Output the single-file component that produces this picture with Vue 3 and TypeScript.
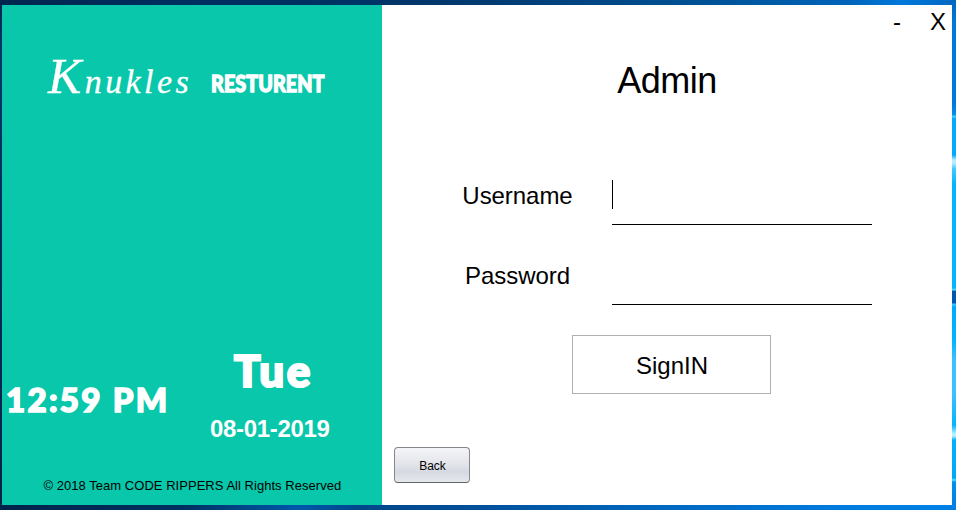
<script setup lang="ts">
import { ref } from 'vue'

const username = ref<string>('')
const password = ref<string>('')
const clock = '12:59 PM'
const day = 'Tue'
const date = '08-01-2019'
</script>

<template>
  <div class="desktop">
    <div class="edge"></div>
    <main class="window">
      <aside class="brand-panel">
        <header class="brand">
          <span class="script">Knukles</span>
          <span class="display name">RESTURENT</span>
        </header>
        <section class="moment">
          <div class="display clock">{{ clock }}</div>
          <div class="calendar">
            <div class="display day">{{ day }}</div>
            <div class="date">{{ date }}</div>
          </div>
        </section>
        <footer class="copyright">© 2018 Team CODE RIPPERS All Rights Reserved</footer>
      </aside>
      <section class="login">
        <nav class="controls"><span>-</span><span>X</span></nav>
        <h1>Admin</h1>
        <form class="form" @submit.prevent>
          <div class="row">
            <label for="user">Username</label>
            <div class="field">
              <input id="user" v-model="username" type="text" />
              <span v-if="!username" class="caret"></span>
            </div>
          </div>
          <div class="row">
            <label for="pass">Password</label>
            <div class="field"><input id="pass" v-model="password" type="password" /></div>
          </div>
          <button class="signin" type="submit">SignIN</button>
        </form>
        <button class="back" type="button">Back</button>
      </section>
    </main>
  </div>
</template>

<style>
body { margin: 0; overflow: hidden; }
</style>

<style scoped>
.desktop {
  position: relative;
  box-sizing: border-box;
  width: 956px;
  height: 510px;
  padding: 5px 4px 5px 2px;
  font-family: "Liberation Sans", Arial, sans-serif;
  color: #000;
  background:
    linear-gradient(90deg, #00264f 0, #002f60 200px, #003060 300px, #003a70 478px, #005296 710px, #0064ba 850px, #0078dc 900px, #0067c0 956px) 0 0 / 956px 5px no-repeat,
    linear-gradient(90deg, #00244b 0, #00305f 180px, #0058ab 300px, #00468a 360px, #00509a 478px, #0067bd 650px, #007cdf 850px, #0080e5 956px) 0 505px / 956px 5px no-repeat,
    linear-gradient(#00264f, #003769 50px, #002b58 250px, #00244b) 0 0 / 2px 510px no-repeat;
}
.edge {
  position: absolute;
  top: 5px;
  right: 0;
  width: 4px;
  height: 500px;
  background: linear-gradient(
    #006bc5 0, #0078dc 20px, #0078dc 98px, #0090ee 110px, #54d0f8 111px, #00aaff 114px, #00aaff 150px,
    #b5edff 155px, #b5edff 158px, #40c8ff 164px, #00b4ff 180px, #00b4ff 283px, #6ae0ff 285px,
    #0055ae 286px, #0055ae 298px, #48c8f8 299px, #00aaff 302px, #00b4ff 335px,
    #3cc0ff 355px, #3cc0ff 390px, #00b4ff 420px, #b5f4ff 429px, #b5f4ff 431px, #00b0ff 435px,
    #00a8f8 473px, #54e0ff 475px, #0090ee 477px, #0080e5 500px
  );
}
.window { display: flex; width: 950px; height: 500px; }
.brand-panel {
  display: flex;
  flex-direction: column;
  box-sizing: border-box;
  width: 380px;
  padding: 46px 0 11px;
  background: #08c7aa;
  color: #fff;
}
.brand { display: flex; align-items: baseline; height: 50px; padding-left: 46px; white-space: nowrap; }
.script {
  width: 163px;
  font: italic 34px/50px "Liberation Serif", serif;
  letter-spacing: 3.4px;
  -webkit-text-stroke: 0.3px #fff;
}
.script::first-letter { font-size: 50px; }
.display { font-family: Lato, sans-serif; font-weight: 900; white-space: nowrap; -webkit-text-stroke: 1.6px #fff; }
.name { padding-bottom: 2px; font-size: 22px; letter-spacing: 0.1px; transform: translateY(-1px) scaleX(0.895); transform-origin: left; -webkit-text-stroke-width: 1.3px; }
.moment { display: flex; margin-top: auto; }
.clock { width: 208px; box-sizing: border-box; padding: 35px 0 0 4px; font-size: 33px; line-height: 38px; letter-spacing: 2.3px; }
.day { padding-left: 24px; font-size: 44px; line-height: 50px; letter-spacing: 2.6px; -webkit-text-stroke-width: 2.2px; }
.date { margin-top: 20px; font-size: 24px; font-weight: 700; line-height: 28px; letter-spacing: -0.33px; }
.copyright { margin-top: 35px; padding-left: 41.5px; font-size: 13px; line-height: 16px; letter-spacing: 0.035px; color: #000; white-space: nowrap; }
.login { display: flex; flex-direction: column; width: 570px; background: #fff; }
.controls { display: flex; justify-content: flex-end; gap: 29px; padding: 3px 6px 0 0; font-size: 24px; line-height: 28px; }
h1 { margin: 24px 0 0; font-size: 36px; font-weight: 400; line-height: 42px; letter-spacing: -0.5px; text-align: center; }
.form { display: flex; flex-direction: column; margin-top: 63px; }
.row { display: flex; height: 60px; margin-bottom: 20px; }
.row label { width: 230px; padding-left: 41px; box-sizing: border-box; padding-top: 17px; font-size: 24px; line-height: 28px; text-align: center; letter-spacing: -0.05px; }
.field { position: relative; width: 260px; height: 60px; }
.field input {
  display: block;
  box-sizing: border-box;
  width: 260px;
  height: 60px;
  padding: 0;
  border: 0;
  border-bottom: 1px solid #000;
  outline: 0;
  background: transparent;
  font: 24px "Liberation Sans", Arial, sans-serif;
}
.caret { position: absolute; left: 0; top: 15px; width: 1px; height: 29px; background: #000; }
.signin {
  width: 199px;
  height: 59px;
  margin: 10px 0 0 190px;
  padding: 3px 0 0 1px;
  border: 1px solid #b0b0b0;
  background: #fff;
  font: 24px "Liberation Sans", Arial, sans-serif;
  color: #000;
}
.back {
  width: 76px;
  height: 36px;
  margin: 53px 0 0 12px;
  padding: 1px 0 0 1px;
  border: 1px solid #85878d;
  border-bottom-color: #606369;
  border-radius: 4px;
  background: linear-gradient(#f4f5f8 0, #e4e6eb 45%, #d5d9e1 70%, #e6e8ed 100%);
  font: 12px "Liberation Sans", Arial, sans-serif;
  color: #000;
}
</style>
